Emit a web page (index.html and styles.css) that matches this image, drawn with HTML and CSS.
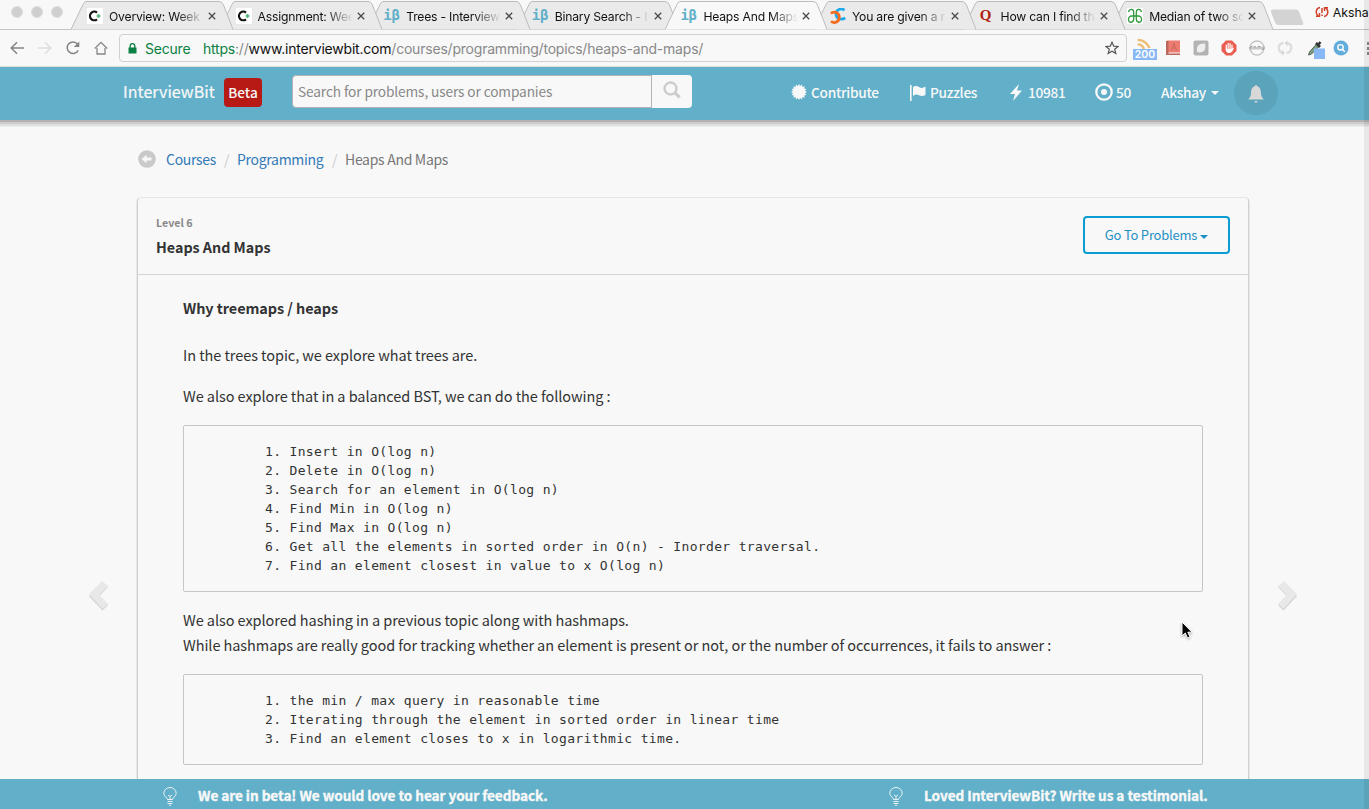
FILE: index.html
```html
<!DOCTYPE html>
<html lang="en">
<head>
<meta charset="utf-8">
<title>Heaps And Maps - InterviewBit</title>
<link rel="stylesheet" href="styles.css">
</head>
<body>
<svg width="0" height="0" class="defs">
  <symbol id="tab" viewBox="0 0 163 30"><path d="M0 29.500L12 4.500Q13.500 1.500 15 1.500H148Q151 1.500 152.500 5L162 29.500" stroke="#bcbcbc"/></symbol>
  <symbol id="close" viewBox="0 0 8 8"><path d="M.8.8l6.400 6.400M7.200.8L.8 7.200" fill="none" stroke="#4a4a4a" stroke-width="1.300"/></symbol>
  <symbol id="coursera" viewBox="0 0 16 16"><path fill="#fff" d="M0 0h16v16H0z"/><path d="M10 4.600A4.300 4.300 0 1 0 10 11.300" fill="none" stroke="#111" stroke-width="2.200"/><path d="M11.500 6v4M9.500 8h4" stroke="#54b27b" stroke-width="1.700"/></symbol>
  <symbol id="bulb" viewBox="0 0 14 19"><g fill="none" stroke="#f8f8f8" stroke-width=".9"><path d="M4.500 12.500C4.500 10.500.8 9.500.8 6.300a6.200 5.800 0 0 1 12.400 0c0 3.200-3.700 4.200-3.700 6.200zM5 8l2 1.500L9 8M7 9.500v3M4.500 14.500h5M4.500 16.500h5M6 18.300h2"/></g></symbol>
</svg>

<div class="browser">
  <div class="tabstrip">
    <div class="lights"><i></i><i></i><i></i></div>
    <div class="tab t1"><svg class="shape"><use href="#tab"/></svg><svg class="fav"><use href="#coursera"/></svg><span class="title">Overview: Week</span><svg class="x"><use href="#close"/></svg></div>
    <div class="tab t2"><svg class="shape"><use href="#tab"/></svg><svg class="fav"><use href="#coursera"/></svg><span class="title">Assignment: Wee</span><svg class="x"><use href="#close"/></svg></div>
    <div class="tab t3"><svg class="shape"><use href="#tab"/></svg><span class="fav ib">iβ</span><span class="title">Trees - Interview</span><svg class="x"><use href="#close"/></svg></div>
    <div class="tab t4"><svg class="shape"><use href="#tab"/></svg><span class="fav ib">iβ</span><span class="title">Binary Search - I</span><svg class="x"><use href="#close"/></svg></div>
    <div class="tab active"><svg class="shape"><use href="#tab"/></svg><span class="fav ib">iβ</span><span class="title">Heaps And Maps</span><svg class="x"><use href="#close"/></svg></div>
    <div class="tab t6"><svg class="shape"><use href="#tab"/></svg><svg class="fav" viewBox="0 0 16 16"><g fill="none" stroke-width="2.700"><path d="M14.500 2.200C11-.4 6 1.500 6 6s5 6.500 9.200 4" stroke="#18a9ee"/><path d="M.8 5.500C4 2.800 9.300 4.500 9.300 9.200S4.500 16 1 13.200" stroke="#f26a1b"/></g></svg><span class="title">You are given a r</span><svg class="x"><use href="#close"/></svg></div>
    <div class="tab t7"><svg class="shape"><use href="#tab"/></svg><span class="fav quora">Q</span><span class="title">How can I find th</span><svg class="x"><use href="#close"/></svg></div>
    <div class="tab t8"><svg class="shape"><use href="#tab"/></svg><svg class="fav" viewBox="0 0 16 16"><path fill="#fff" d="M0 0h16v16H0z"/><path d="M1.500 4C2.500.5 6.700.5 6.700 4.500V11c0 4-5.200 4.500-5.200.5C1.500 9.500 3 8 4.500 8h7c1.500 0 3 1.500 3 3.500 0 4-5.200 3.500-5.200-.5V4.500c0-4 4.200-4 5.200-.5" fill="none" stroke="#2f9b3c" stroke-width="1.300"/></svg><span class="title">Median of two sc</span><svg class="x"><use href="#close"/></svg></div>
    <svg class="newtab" viewBox="0 0 34 17"><path d="M3 .5h23q2 0 3 2l4 11q1 2.500-1.500 2.500H9q-3 0-4-2.500L1 3Q.5.500 3 .5z" fill="#d3d3d3"/></svg>
    <svg class="sync" viewBox="0 0 14 12"><g fill="none" stroke="#d2402c" stroke-width="1.500"><path d="M5 1.500C1 2 0 7 3 10M1 10.300h3.500V7M9 10.500c4-.5 5-5.500 2-8.500M13 1.700H9.500V5"/><path d="M7 2v5M7 8.500V10"/></g></svg>
    <span class="profile">Aksha</span>
  </div>
  <div class="toolbar">
    <svg class="nav n1" viewBox="0 0 14 14"><path d="M14 7H1.500M7 1.200L1.200 7 7 12.800" fill="none" stroke="#858585" stroke-width="1.500"/></svg>
    <svg class="nav n2" viewBox="0 0 14 14"><path d="M0 7h12.500M7 1.200L12.800 7 7 12.800" fill="none" stroke="#dedede" stroke-width="1.500"/></svg>
    <svg class="nav n3" viewBox="0 0 14 14"><path d="M12.200 9.300A5.800 5.800 0 1 1 11.500 3" fill="none" stroke="#858585" stroke-width="1.500"/><path d="M13.300.5v5.500H7.800z" fill="#858585"/></svg>
    <svg class="nav n4" viewBox="0 0 14 14"><path d="M.8 7.500L7 1.300l6.200 6.200M3 7v6h8V7" fill="none" stroke="#858585" stroke-width="1.300"/></svg>
    <div class="omnibox">
      <svg class="lock" viewBox="0 0 9 11"><path d="M.5 4.500h8v6h-8z" fill="#0b8043"/><path d="M2.200 5V3a2.300 2.300 0 0 1 4.600 0v2" fill="none" stroke="#0b8043" stroke-width="1.300"/></svg>
      <span class="secure">Secure</span>
      <span class="url"><em>https</em>://<b>www.interviewbit.com</b>/courses/programming/topics/heaps-and-maps/</span>
      <svg class="star" viewBox="0 0 14 14"><path d="M7 1.200l1.700 4 4.300.3-3.300 2.800 1.100 4.200L7 10.200l-3.800 2.300 1.100-4.200L1 5.500l4.300-.3z" fill="none" stroke="#555" stroke-width="1.200"/></svg>
    </div>
    <div class="exts">
      <div class="rss"><svg viewBox="0 0 16 12"><path d="M1 2q9 0 13 9M1 7q5 0 7 5" fill="none" stroke="#edbd72" stroke-width="2.600"/></svg><span>200</span></div>
      <svg viewBox="0 0 16 16"><path d="M2 .5h13v12H2z" fill="#ed7d71"/><path d="M1 1h2.500v14H1zM1 13.500h14V15H1z" fill="#b9685f"/><path d="M6.500 10.500l2.500-7 2.500 7M7.500 8h3" fill="none" stroke="#c9685f"/></svg>
      <svg viewBox="0 0 16 16"><rect x=".5" y=".5" width="15" height="15" rx="2" fill="#b3b3b3"/><path d="M4 12Q2 3 12 3.500 14 12 7 12.500z" fill="#eee"/></svg>
      <svg viewBox="0 0 16 16"><path d="M5 .5h6L15.500 5v6L11 15.500H5L.5 11V5z" fill="#ea5e52"/><path d="M5.300 10V5M7.200 8V3.300M9.100 8V3.600M11 9V5" stroke="#fff" stroke-width="1.200" stroke-linecap="round"/><path d="M4.700 8.500h6.900l.9-1q.8.500 0 1.500-1.500 4-4.500 4-3.300 0-3.300-4.500z" fill="#fff"/></svg>
      <svg viewBox="0 0 16 16"><circle cx="8" cy="8" r="7" fill="none" stroke="#c5c5c5" stroke-width="1.300"/><path d="M1 9.500V7l2-.5v3M5 9.500v-3l2 .5v2.500M9 9.500v-3h2v3M13 6.500v3l2-.5V6.500" fill="none" stroke="#999"/></svg>
      <svg viewBox="0 0 16 16"><path d="M6.500 3Q1.500 3.500 1.800 8t4 4.700M9.500 3.300q5 .2 4.700 4.700t-4.700 5" fill="none" stroke="#dedede" stroke-width="2.500"/><path d="M5 9.800l3 3-3 3zM10.500.300v6l-3-3z" fill="#d8d8d8"/></svg>
      <svg class="picker" viewBox="0 0 18 20"><path d="M1.500 16l1-3 7-8 2.500 2.500-7.500 7.500z" fill="#7aa184" stroke="#526359"/><path d="M9 4l4 4M11 6l2.500-3" stroke="#333" stroke-width="2.500"/><path d="M7 9.500h11V20H7z" fill="#88b8f5"/></svg>
      <svg viewBox="0 0 16 16"><circle cx="8" cy="8" r="7.500" fill="#63addd"/><circle cx="7.500" cy="7.300" r="2.700" fill="none" stroke="#fff" stroke-width="1.400"/><path d="M9.500 9.500l2.300 2.300" stroke="#fff" stroke-width="1.600"/></svg>
      <svg class="more" viewBox="0 0 3 14"><path d="M0 1h3v3H0zM0 6h3v3H0zM0 11h3v3H0z" fill="#888"/></svg>
    </div>
  </div>
</div>

<header class="site">
  <span class="brand">InterviewBit</span><span class="beta">Beta</span>
  <div class="search"><span>Search for problems, users or companies</span></div>
  <div class="go"><svg viewBox="0 0 18 18"><circle cx="7.500" cy="7.500" r="6" fill="none" stroke="#ccc" stroke-width="2.400"/><path d="M11.700 11.700l5 4.700" stroke="#ccc" stroke-width="3"/></svg></div>
  <nav>
    <a class="contribute"><svg viewBox="0 0 16 16"><path fill="#f8f8f8" d="M8 0l1.200 2 1.900-1.400.3 2.300 2.300-.6-.6 2.300 2.300.3L14 6.800 16 8l-2 1.200 1.400 1.900-2.300.3.600 2.300-2.300-.6-.3 2.300L9.200 14 8 16l-1.200-2-1.900 1.400-.3-2.300-2.300.6.6-2.300-2.300-.3L2 9.200 0 8l2-1.200L.6 4.900l2.300-.3-.6-2.300 2.300.6.3-2.300L6.800 2z"/></svg><span>Contribute</span></a>
    <a class="puzzles"><svg viewBox="0 0 16 16"><path fill="#f8f8f8" d="M0 0h1.600v16H0zM3 2q3-2 6 0t6.500-.5v8.500q-3.500 2-6.500.3T3 11z"/></svg><span>Puzzles</span></a>
    <a class="points"><svg viewBox="0 0 12 17"><path fill="#f8f8f8" d="M9 0L0 10h5L3 17l9-10.500H7z"/></svg><span>10981</span></a>
    <a class="coins"><svg viewBox="0 0 18 18"><circle cx="9" cy="9" r="7.700" fill="none" stroke="#f8f8f8" stroke-width="2.300"/><circle cx="9" cy="9" r="3" fill="#f8f8f8"/></svg><span>50</span></a>
    <a class="user"><span>Akshay</span><i class="caret"></i></a>
    <a class="bell"><svg viewBox="0 0 16 18"><path fill="#d8d8d8" d="M8 0q1 0 1.200 1.200C12.500 2 12.800 5 13 8.500c.2 3 1 4 3 6H0c2-2 2.800-3 3-6C3.200 5 3.500 2 6.800 1.200Q7 0 8 0zM6.500 16h3Q9.500 17.800 8 17.800T6.500 16z"/></svg></a>
  </nav>
</header>

<main class="page">
  <div class="crumbs">
    <svg viewBox="0 0 18 18"><circle cx="9" cy="9" r="8.800" fill="#c9c9c9"/><path fill="#f8f8f8" d="M3.500 9l5-4.200v2.700h5v3h-5v2.700z"/></svg>
    <a class="c1">Courses</a><s>/</s><a class="c2">Programming</a><s>/</s><span class="c3">Heaps And Maps</span>
  </div>
  <div class="row">
    <svg class="arrow" viewBox="0 0 22 32"><path transform="translate(0 1)" fill="#d2d2d2" d="M14 1l6 5-8.500 9L20 24l-5.500 5.500L1 15z"/><path fill="#e8e8e8" d="M14 1l6 5-8.500 9L20 24l-5.500 5L1 14z"/></svg>
    <section class="card">
      <div class="head">
        <div><p class="level">Level 6</p><h1>Heaps And Maps</h1></div>
        <div class="button"><span>Go To Problems</span><i class="caret"></i></div>
      </div>
      <article class="content">
        <h2>Why treemaps / heaps</h2>
        <p>In the trees topic, we explore what trees are.</p>
        <p>We also explore that in a balanced BST, we can do the following :</p>
        <pre>1. Insert in O(log n)
2. Delete in O(log n)
3. Search for an element in O(log n)
4. Find Min in O(log n)
5. Find Max in O(log n)
6. Get all the elements in sorted order in O(n) - Inorder traversal.
7. Find an element closest in value to x O(log n)</pre>
        <p>We also explored hashing in a previous topic along with hashmaps.<br>While hashmaps are really good for tracking whether an element is present or not, or the number of occurrences, it fails to answer :</p>
        <pre>1. the min / max query in reasonable time
2. Iterating through the element in sorted order in linear time
3. Find an element closes to x in logarithmic time.</pre>
      </article>
    </section>
    <svg class="arrow right" viewBox="0 0 22 32"><path transform="translate(0 1)" fill="#d2d2d2" d="M8 1L2 6l8.500 9L2 24l5.500 5.500L21 15z"/><path fill="#e8e8e8" d="M8 1L2 6l8.500 9L2 24l5.500 5L21 14z"/></svg>
  </div>
</main>

<footer>
  <div class="note"><svg><use href="#bulb"/></svg><span>We are in beta! We would love to hear your feedback.</span></div>
  <div class="note last"><svg><use href="#bulb"/></svg><span>Loved InterviewBit? Write us a testimonial.</span></div>
</footer>

<div class="edge"></div>
<svg class="cursor" viewBox="0 0 12 19"><path d="M1 1v14l3.300-3 2.200 5 2.500-1-2.200-4.800H11z" fill="#000" stroke="#fff"/></svg>
</body>
</html>
```
FILE: styles.css
```css
* { box-sizing: border-box; }
body {
  margin: 0; width: 1369px; height: 809px; overflow: hidden; position: relative;
  display: flex; flex-direction: column; background: #f8f8f8; color: #333;
  font-family: "Noto Sans CJK SC", "Noto Sans", sans-serif; font-size: 15px;
}
.defs { position: absolute; }
svg { display: block; flex: none; }
p, h1, h2, pre { margin: 0; }

/* browser window */
.browser { height: 67px; flex: none; font-family: Inter, "Open Sans", sans-serif; border-bottom: 1px solid #ddd; }
.tabstrip { display: flex; height: 30px; border-bottom: 1px solid #c4c4c4; white-space: nowrap; }
.lights { width: 71px; padding: 6px 0 0 11px; display: flex; gap: 8px; flex: none; }
.lights i { width: 12px; height: 12px; border-radius: 50%; background: #cfcfcf; border: 1px solid #dedede; }
.tab { position: relative; width: 148.6px; height: 30px; flex: none; display: flex; align-items: center; padding: 2px 0 0 16px; font-size: 12.2px; letter-spacing: -.22px; color: #111; }
.shape { position: absolute; left: 0; top: 0; width: 163px; height: 30px; fill: #eaeaea; z-index: -1; }
.tab.active .shape { fill: #f8f8f8; }
.active { z-index: 9; } .t1 { z-index: 8; } .t2 { z-index: 7; } .t3 { z-index: 6; } .t4 { z-index: 5; }
.t6 { z-index: 4; } .t7 { z-index: 3; } .t8 { z-index: 2; }
.fav { width: 16px; height: 16px; flex: none; }
.ib { font: bold 14px/15px "DejaVu Sans Mono", monospace; color: #61afc8; letter-spacing: -.2px; text-indent: -1px; }
.quora { font: bold 15px/15px "Liberation Serif", serif; color: #b0220f; text-align: center; text-indent: -2px; }
.title { width: 97px; margin-left: 6px; flex: none; -webkit-mask-image: linear-gradient(90deg, #000 68px, transparent 95px); mask-image: linear-gradient(90deg, #000 68px, transparent 95px); }
.x { width: 8px; height: 8px; margin-left: 2px; }
.newtab { width: 34px; height: 17px; margin: 9px 0 0 10px; }
.sync { width: 14px; height: 12px; margin: 6px 0 0 11px; }
.profile { margin: 5px 0 0 4px; font-size: 12.3px; line-height: 16px; color: #111; }
.toolbar { height: 36px; display: flex; align-items: center; padding-left: 10px; }
.nav { width: 14px; height: 14px; margin-right: 14px; }
.omnibox { width: 1008px; height: 28px; border: 1px solid #d0d0d0; border-radius: 4px; display: flex; align-items: center; padding: 0 8px; font-size: 14px; letter-spacing: -.21px; margin-left: -3px; flex: none; }
.lock { width: 9px; height: 11px; }
.secure { color: #0b8043; width: 58px; margin-left: 8px; }
.url { color: #888; flex: 1; }
.url em { font-style: normal; color: #0b8043; }
.url b { font-weight: 400; color: #111; }
.star { width: 14px; height: 14px; margin-right: -1px; }
.exts { display: flex; margin-left: 6px; align-items: center; gap: 12px; }
.exts svg { width: 16px; height: 16px; }
.exts .rss { width: 24px; height: 22px; margin: 2px -4px 0 0; }
.rss svg { height: 11px; margin-left: 3px; }
.rss span { display: block; background: #88b8f5; color: #fff; font-size: 10.5px; line-height: 11px; text-align: center; font-weight: 600; }
.exts .picker { width: 18px; height: 20px; margin: 2px -4px 0 2px; }
.exts .more { width: 3px; height: 14px; margin-left: 6px; }

/* site header */
.site { height: 53px; flex: none; background: #61afc8; color: #f8f8f8; display: flex; padding-left: 123px; position: relative;
  box-shadow: 0 2px #b5b1b1, 0 4px #cdcdcd, 0 6px #dedede, 0 7px #ececec; }
.brand { width: 101px; font-size: 16px; line-height: 48px; letter-spacing: .05px; -webkit-text-stroke: .2px #f8f8f8; }
.beta { width: 38px; height: 29px; margin-top: 11px; border-radius: 4px; background: #b71a14; font-size: 13.600px; font-weight: 500; line-height: 28px; text-align: center; }
.search { width: 360px; height: 33px; margin: 8px 0 0 30px; background: #f8f8f8; border: 1px solid #b3b3b3; border-radius: 4px 0 0 4px; color: #888; font-size: 13.700px; letter-spacing: -.12px; line-height: 30px; padding-left: 5px; }
.go { width: 40px; height: 33px; margin-top: 8px; background: #f8f8f8; border-radius: 0 4px 4px 0; padding: 6px 0 0 11px; }
.go svg { width: 18px; height: 18px; }
nav { display: flex; align-items: center; margin-left: 99px; font-size: 13.700px; letter-spacing: -.3px; font-weight: 500; height: 52px; white-space: nowrap; }
nav a { display: flex; align-items: center; }
nav span { line-height: 24px; margin-top: -2px; }
.contribute { width: 119px; gap: 4px; } .contribute svg, .puzzles svg { width: 16px; height: 16px; }
.contribute svg, .points svg { margin-top: -2px; }
.coins svg { margin-top: -2px; }
.puzzles { width: 100px; gap: 4px; }
.points { width: 85px; gap: 6px; } .points svg { width: 12px; height: 17px; }
.coins { width: 66px; gap: 3px; } .coins svg { width: 18px; height: 18px; }
.user { width: 73px; gap: 5px; }
.caret { border: 4px solid transparent; border-top-color: currentColor; border-bottom: 0; }
.bell { width: 44px; height: 44px; border-radius: 50%; background: #5ba3ba; justify-content: center; }
.bell svg { width: 16px; height: 18px; margin-top: 2px; }

/* page */
.page { flex: 1; min-height: 0; overflow: hidden; padding-top: 27px; position: relative; z-index: -1; }
.crumbs { margin-left: 138px; height: 24px; display: flex; align-items: center; font-size: 14px; letter-spacing: -.3px; line-height: 24px; color: #777; }
.crumbs svg { width: 18px; height: 18px; margin-right: 10px; }
.crumbs a { color: #337ab7; }
.crumbs s { text-decoration: none; color: #ccc; width: 21px; text-align: center; }
.c1 { width: 50px; } .c2 { width: 87px; }
.row { display: flex; margin-top: 26px; padding-left: 88px; }
.arrow { width: 22px; height: 32px; margin-top: 383px; }
.right { margin-left: 27px; }
.card { width: 1112px; margin-left: 27px; height: 600px; border: 1px solid #e6e6e6; border-left-color: #d0d0d0; border-right-color: #d0d0d0; border-radius: 4px; box-shadow: -1px 2px #e8e8e8, 1px 2px #e8e8e8; }
.head { height: 77px; border-bottom: 1px solid #d4d4d4; padding: 17px 18px 0; display: flex; justify-content: space-between; }
.level { font-size: 10.700px; line-height: 16px; font-weight: 700; color: #888; }
h1 { font-size: 14.300px; line-height: 24px; margin-top: 4px; }
.button { width: 147px; height: 38px; margin-top: 1px; border: 2px solid #0b9dd2; border-radius: 4px; color: #1f8fc4; display: flex; align-items: center; justify-content: center; gap: 3px; font-size: 13px; letter-spacing: -.22px; line-height: 24px; }
.button .caret { margin-top: 3px; }
.content { padding: 20px 45px 0; line-height: 25px; font-size: 14.500px; letter-spacing: -.064px; white-space: nowrap; }
h2 { font-size: 14.450px; line-height: 25px; margin-bottom: 22px; }
.content p { margin-bottom: 16px; }
.content pre { width: 1020px; border: 1px solid #c6c6c6; border-radius: 2px; padding: 16px 0 16px 81px; margin: 0 0 16px; position: relative; top: 1px; font: 13px/19px "DejaVu Sans Mono", monospace; letter-spacing: .34px; }

footer { height: 30px; flex: none; background: #61afc8; color: #f8f8f8; display: flex; padding: 0 0 0 163px; font-size: 13.600px; letter-spacing: -.05px; font-weight: 700; line-height: 32px; white-space: nowrap; -webkit-text-stroke: .35px #f8f8f8; }
.note { width: 726px; display: flex; gap: 21px; flex: none; }
.last { width: 400px; }
.note svg { width: 14px; height: 19px; margin-top: 8px; }
.edge { position: absolute; right: 0; top: 0; width: 5px; height: 809px; background: rgba(0,0,0,.065); z-index: 20; }
.cursor { position: absolute; left: 1181px; top: 621px; width: 12px; height: 19px; filter: drop-shadow(0 1px 1px #aaa); }
```
